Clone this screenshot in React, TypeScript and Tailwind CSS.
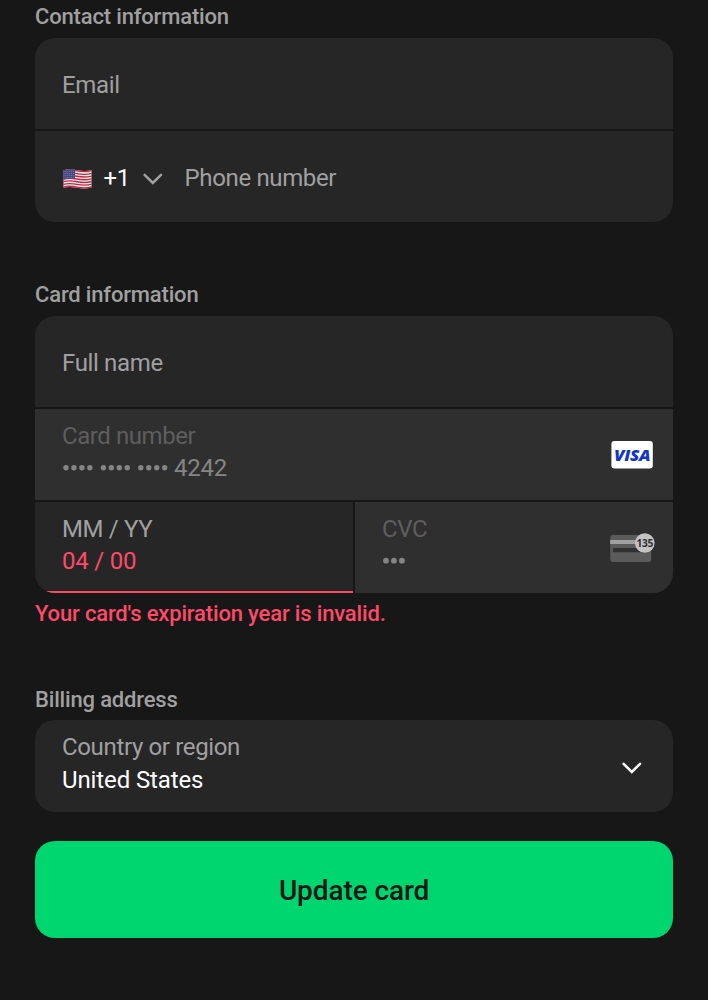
import type { ReactNode } from "react";

function Chevron({ className }: { className: string }) {
  return (
    <svg viewBox="0 0 20 12" className={className} fill="none" stroke="currentColor" strokeWidth="2.5" strokeLinecap="round" strokeLinejoin="miter">
      <path d="M1.6 1.8 9.8 10 18 1.8" />
    </svg>
  );
}

function UsFlag() {
  const wave = (y: number) => `M0.5 ${y}C5 ${y - 1.3} 9 ${y - 1} 14 ${y}S24 ${y + 1.1} 28.5 ${y - 0.2}`;
  return (
    <svg viewBox="0 0 29 20" className="mt-px h-5 w-[29px]" fill="none">
      <path d="M0.5 1.2C5 0 9 0.2 14 1.2S24 2.4 28.5 1V18.4C24 19.8 19 19.7 14 18.8S5 17.4 0.5 18.8Z" fill="#f3eef0" />
      {[1.9, 4.6, 7.3, 10, 12.7, 15.4, 18.1].map((y) => (
        <path key={y} d={wave(y)} stroke="#bd2a43" strokeWidth="1.4" />
      ))}
      <path d="M0.3 1.2C4 0.1 8 0.1 12 0.8V10.2C8 9.5 4 9.7 0.3 10.6Z" fill="#494983" />
      {[2.5, 4.5, 6.5, 8.5].map((y) => (
        <path key={y} d={`M1.7 ${y}H11`} stroke="#8c8cb4" strokeWidth="0.8" strokeDasharray="0.8 1.3" />
      ))}
    </svg>
  );
}

function VisaBadge() {
  return (
    <svg viewBox="0 0 42 28" className="h-7 w-[42px]">
      <rect x="0.4" y="0" width="41.4" height="27.4" rx="3" fill="#fff" />
      <text x="3.1" y="19.5" textLength="36" lengthAdjust="spacingAndGlyphs" fill="#1434cb" fontFamily="Open Sans, sans-serif" fontSize="15.5" fontWeight="800" fontStyle="italic">
        VISA
      </text>
    </svg>
  );
}

function CvcCard() {
  return (
    <svg viewBox="0 0 45 30" className="h-[30px] w-[45px]">
      <rect x="0.2" y="2" width="41" height="27" rx="3" fill="#5b5b5b" />
      <rect x="0.2" y="7" width="41" height="4" fill="#a1a1a1" />
      <rect x="3" y="15" width="36" height="4.3" rx="1" fill="#303030" />
      <circle cx="34.8" cy="10" r="9.8" fill="#c4c4c4" />
      <text x="26.5" y="14.2" textLength="16.4" lengthAdjust="spacingAndGlyphs" fill="#303030" fontFamily="Open Sans, sans-serif" fontSize="11.2" fontWeight="700">
        135
      </text>
    </svg>
  );
}

function Heading({ children }: { children: ReactNode }) {
  return <h2 className="text-[22px] leading-[26px] font-medium tracking-[-0.17px] text-[#a0a0a0]">{children}</h2>;
}

function Dots({ groups, size }: { groups: number[]; size: number }) {
  const pitch = 7.95;
  const groupPitch = 37.4;
  const width = (groups.length - 1) * groupPitch + groups[groups.length - 1] * pitch;
  return (
    <svg width={width} height="8" fill="#858585">
      {groups.flatMap((count, g) =>
        Array.from({ length: count }, (_, i) => (
          <circle key={`${g}-${i}`} cx={4 + g * groupPitch + i * pitch} cy="3.7" r={size / 2} />
        )),
      )}
    </svg>
  );
}

export default function App() {
  return (
    <main className="h-[1000px] overflow-hidden bg-[#171717] px-[35px] pt-1 font-['Roboto',sans-serif] text-2xl leading-8 tracking-[-0.35px] text-[#a0a0a0]">
      <section>
        <Heading>Contact information</Heading>
        <div className="mt-2 grid gap-0.5 overflow-hidden rounded-[20px]">
          <div className="flex h-[91px] items-center bg-[#262626] px-[27px] pt-[3px]">Email</div>
          <div className="flex h-[91px] items-center bg-[#262626] px-[27.5px] pt-[3px]">
            <UsFlag />
            <span className="ml-3 w-[27px] text-white">+1</span>
            <Chevron className="mt-px ml-3 h-3 w-5" />
            <span className="ml-[22px]">Phone number</span>
          </div>
        </div>
      </section>

      <section className="mt-[60px]">
        <Heading>Card information</Heading>
        <div className="mt-2 grid grid-cols-2 gap-0.5 overflow-hidden rounded-[20px]">
          <div className="col-span-2 flex h-[91px] items-center bg-[#262626] px-[27px] pt-[3px]">Full name</div>
          <div className="col-span-2 flex h-[91px] items-center justify-between bg-[#2f2f2f] pr-[20px] pl-[27px]">
            <div className="pb-[5px]">
              <div className="tracking-[-0.42px] text-[#5e5e5e]">Card number</div>
              <div className="-mt-px flex h-[33px] items-center text-[#858585]">
                <Dots groups={[4, 4, 4]} size={5.4} />
                <span className="ml-[5.5px] tracking-[-0.24px]">4242</span>
              </div>
            </div>
            <VisaBadge />
          </div>
          <div className="h-[91px] border-b-2 border-[#fe4a69] bg-[#262626] px-[27px] pt-[11px]">
            <div>MM / YY</div>
            <div className="leading-[33px] tracking-[-0.2px] text-[#fe4a69]">04 / 00</div>
          </div>
          <div className="flex h-[91px] items-center justify-between bg-[#2f2f2f] pr-[18px] pl-[27px]">
            <div className="pb-[5px]">
              <div className="text-[#5e5e5e]">CVC</div>
              <div className="flex h-[33px] items-center">
                <Dots groups={[3]} size={5.8} />
              </div>
            </div>
            <CvcCard />
          </div>
        </div>
        <p className="mt-2 text-[22px] leading-[26px] font-medium tracking-[-0.16px] text-[#fe4a69]">
          Your card's expiration year is invalid.
        </p>
      </section>

      <section className="mt-[60px]">
        <Heading>Billing address</Heading>
        <div className="mt-[7.4px] flex h-[91.6px] items-center justify-between rounded-[20px] bg-[#262626] pr-[31.5px] pl-[27px]">
          <div className="pb-[4px]">
            <div>Country or region</div>
            <div className="leading-[34px] tracking-[-0.12px] text-white">United States</div>
          </div>
          <Chevron className="mt-1 h-3 w-5 text-white" />
        </div>
      </section>

      <button className="mt-[29px] h-[97px] w-full rounded-[20px] bg-[#00d66f] pt-[3px] text-[28px] font-medium tracking-[-0.1px] text-[#171717]">
        Update card
      </button>
    </main>
  );
}
